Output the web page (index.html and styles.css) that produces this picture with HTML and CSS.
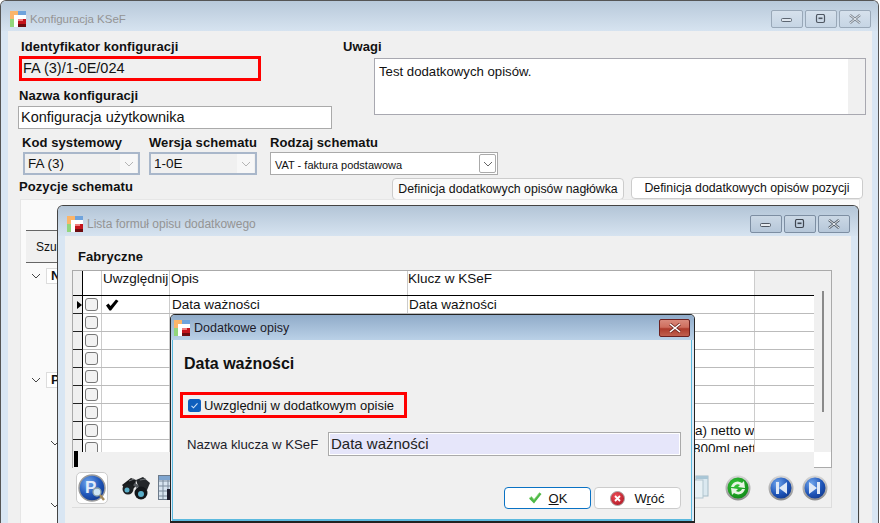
FILE: index.html
```html
<!DOCTYPE html>
<html lang="pl">
<head>
<meta charset="utf-8">
<title>Konfiguracja KSeF</title>
<link rel="stylesheet" href="styles.css">
</head>
<body>
<svg class="defs" width="0" height="0" aria-hidden="true">
  <defs>
    <symbol id="logo" viewBox="0 0 16 16">
      <rect x="0" y="0" width="8" height="8" fill="#fbb56a"/>
      <rect x="8" y="0" width="8" height="4" fill="#6fa3dc"/>
      <rect x="0" y="8" width="4" height="8" fill="#92d67c"/>
      <rect x="4" y="4" width="12" height="12" fill="#fff"/>
      <rect x="8" y="8" width="8" height="8" fill="#c4141c"/>
      <rect x="8" y="13" width="8" height="3" fill="#6d0c10"/>
      <rect x="8" y="8" width="5" height="2" fill="#ef7d7d"/>
    </symbol>
    <radialGradient id="blueB" cx=".35" cy=".3" r=".85">
      <stop offset="0" stop-color="#6fa5ec"/><stop offset=".55" stop-color="#1f55b8"/><stop offset="1" stop-color="#0c2f80"/>
    </radialGradient>
    <radialGradient id="greenB" cx=".4" cy=".35" r=".8">
      <stop offset="0" stop-color="#36c53a"/><stop offset="1" stop-color="#087d10"/>
    </radialGradient>
    <radialGradient id="redB" cx=".4" cy=".35" r=".8">
      <stop offset="0" stop-color="#f0505a"/><stop offset="1" stop-color="#a80f1c"/>
    </radialGradient>
    <linearGradient id="ring" x1="0" y1="0" x2="0" y2="1">
      <stop offset="0" stop-color="#d5d5d5"/><stop offset="1" stop-color="#8f8f8f"/>
    </linearGradient>
  </defs>
</svg>

<section class="win win-main">
  <header class="titlebar">
    <svg class="logo"><use href="#logo"/></svg>
    <span class="title title-off title-main">Konfiguracja KSeF</span>
    <div class="caps caps-main">
      <span class="cap"><svg width="12" height="8" viewBox="0 0 12 8"><rect x=".5" y="3.500" width="10" height="3" rx="1" fill="#dfe6ee" stroke="#5d6672"/></svg></span>
      <span class="cap"><svg width="12" height="10" viewBox="0 0 12 10"><rect x="1.500" y=".5" width="8" height="8" rx="1.500" fill="none" stroke="#4f5762" stroke-width="1.200"/><rect x="3.500" y="3.500" width="4" height="1.600" fill="#4f5762"/></svg></span>
      <span class="cap"><svg width="14" height="10" viewBox="0 0 14 10"><path d="M2 1l10 8M12 1L2 9" stroke="#7d858f" stroke-width="2.400" fill="none"/><path d="M2 1l10 8M12 1L2 9" stroke="#e4e9ef" stroke-width="1" fill="none"/></svg></span>
    </div>
  </header>
  <div class="body-main">
    <div class="top-row">
      <div class="col-id">
        <label class="lbl lbl-id">Identyfikator konfiguracji</label>
        <div class="red-id">FA (3)/1-0E/024</div>
        <label class="lbl lbl-name">Nazwa konfiguracji</label>
        <div class="inp inp-name">Konfiguracja użytkownika</div>
      </div>
      <div class="col-note">
        <label class="lbl">Uwagi</label>
        <div class="memo"><span class="memo-text">Test dodatkowych opisów.</span><span class="memo-track"></span></div>
      </div>
    </div>
    <div class="combo-row">
      <div class="combo-col c-kod">
        <label class="lbl">Kod systemowy</label>
        <div class="combo combo-off"><span>FA (3)</span><span class="drop drop-off"><svg width="10" height="6" viewBox="0 0 10 6"><path d="M1 1l4 4 4-4" fill="none" stroke="#b5b5b5"/></svg></span></div>
      </div>
      <div class="combo-col c-wer">
        <label class="lbl">Wersja schematu</label>
        <div class="combo combo-off"><span>1-0E</span><span class="drop drop-off"><svg width="10" height="6" viewBox="0 0 10 6"><path d="M1 1l4 4 4-4" fill="none" stroke="#b5b5b5"/></svg></span></div>
      </div>
      <div class="combo-col c-rod">
        <label class="lbl">Rodzaj schematu</label>
        <div class="combo combo-on"><span>VAT - faktura podstawowa</span><span class="drop drop-on"><svg width="10" height="6" viewBox="0 0 10 6"><path d="M1 1l4 4 4-4" fill="none" stroke="#666"/></svg></span></div>
      </div>
    </div>
    <div class="pos-row">
      <label class="lbl lbl-pos">Pozycje schematu</label>
      <button class="btn btn-head">Definicja dodatkowych opisów nagłówka</button>
      <button class="btn btn-pos">Definicja dodatkowych opisów pozycji</button>
    </div>
    <div class="panel">
      <div class="search">Szukaj</div>
      <div class="node node-n"><svg width="10" height="6" viewBox="0 0 10 6"><path d="M1 1l4 4 4-4" fill="none" stroke="#444"/></svg><span class="tag">N</span></div>
      <div class="node node-p"><svg width="10" height="6" viewBox="0 0 10 6"><path d="M1 1l4 4 4-4" fill="none" stroke="#444"/></svg><span class="tag">P</span></div>
      <div class="node node-c1"><svg width="10" height="6" viewBox="0 0 10 6"><path d="M1 1l4 4 4-4" fill="none" stroke="#444"/></svg></div>
      <div class="node node-c2"><svg width="10" height="6" viewBox="0 0 10 6"><path d="M1 1l4 4 4-4" fill="none" stroke="#444"/></svg></div>
    </div>
  </div>
</section>

<section class="win win-list">
  <header class="titlebar tb-list">
    <svg class="logo"><use href="#logo"/></svg>
    <span class="title title-off">Lista formuł opisu dodatkowego</span>
    <div class="caps caps-list">
      <span class="cap cap-dark"><svg width="12" height="8" viewBox="0 0 12 8"><rect x=".5" y="3.500" width="10" height="3" rx="1" fill="#e6ebf0" stroke="#4f5762"/></svg></span>
      <span class="cap cap-dark"><svg width="12" height="10" viewBox="0 0 12 10"><rect x="1.500" y=".5" width="8" height="8" rx="1.500" fill="none" stroke="#3f4650" stroke-width="1.200"/><rect x="3.500" y="3.500" width="4" height="1.600" fill="#3f4650"/></svg></span>
      <span class="cap cap-dark"><svg width="14" height="10" viewBox="0 0 14 10"><path d="M2 1l10 8M12 1L2 9" stroke="#56606b" stroke-width="2.600" fill="none"/><path d="M2 1l10 8M12 1L2 9" stroke="#f1f4f7" stroke-width="1" fill="none"/></svg></span>
    </div>
  </header>
  <div class="body-list">
    <h2 class="lbl fab">Fabryczne</h2>
    <div class="grid">
      <div class="grid-main">
        <div class="g-head">
          <span class="c c-ind"></span><span class="c c-chk"></span>
          <span class="c c-uwz">Uwzględnij</span><span class="c c-opis">Opis</span>
          <span class="c c-klucz">Klucz w KSeF</span><span class="c c-ext"></span>
        </div>
        <div class="g-body">
          <div class="g-row"><span class="c c-ind"><i class="tri"></i></span><span class="c c-chk"><i class="box"></i></span><span class="c c-uwz"><svg class="tick" width="14" height="12" viewBox="0 0 14 12"><path d="M1 6.500L3.500 4.500 5.500 7 11 .5 13.500 2 6 11.500H4.500z" fill="#000"/></svg></span><span class="c c-opis val">Data ważności</span><span class="c c-klucz val">Data ważności</span><span class="c c-ext"></span></div>
          <div class="g-row"><span class="c c-ind"></span><span class="c c-chk"><i class="box"></i></span><span class="c c-uwz"></span><span class="c c-opis"></span><span class="c c-klucz"></span><span class="c c-ext"></span></div>
          <div class="g-row"><span class="c c-ind"></span><span class="c c-chk"><i class="box"></i></span><span class="c c-uwz"></span><span class="c c-opis"></span><span class="c c-klucz"></span><span class="c c-ext"></span></div>
          <div class="g-row"><span class="c c-ind"></span><span class="c c-chk"><i class="box"></i></span><span class="c c-uwz"></span><span class="c c-opis"></span><span class="c c-klucz"></span><span class="c c-ext"></span></div>
          <div class="g-row"><span class="c c-ind"></span><span class="c c-chk"><i class="box"></i></span><span class="c c-uwz"></span><span class="c c-opis"></span><span class="c c-klucz"></span><span class="c c-ext"></span></div>
          <div class="g-row"><span class="c c-ind"></span><span class="c c-chk"><i class="box"></i></span><span class="c c-uwz"></span><span class="c c-opis"></span><span class="c c-klucz"></span><span class="c c-ext"></span></div>
          <div class="g-row"><span class="c c-ind"></span><span class="c c-chk"><i class="box"></i></span><span class="c c-uwz"></span><span class="c c-opis"></span><span class="c c-klucz"></span><span class="c c-ext"></span></div>
          <div class="g-row"><span class="c c-ind"></span><span class="c c-chk"><i class="box"></i></span><span class="c c-uwz"></span><span class="c c-opis"></span><span class="c c-klucz val tail">a) netto w</span><span class="c c-ext"></span></div>
          <div class="g-row"><span class="c c-ind"></span><span class="c c-chk"><i class="box"></i></span><span class="c c-uwz"></span><span class="c c-opis"></span><span class="c c-klucz val tail tail-b">800ml netto</span><span class="c c-ext"></span></div>
        </div>
        <div class="hscroll"><i class="hmark"></i></div>
      </div>
      <div class="vscroll"><i class="vthumb"></i><i class="vcorner"></i></div>
    </div>
    <div class="toolbar">
      <span class="tool tool-p">
        <svg width="30" height="30" viewBox="0 0 30 30"><circle cx="15" cy="15" r="13" fill="url(#blueB)" stroke="#9b9b9b" stroke-width="1.500"/><text x="8" y="20" class="tool-p-letter">P</text><circle cx="20" cy="19" r="4" fill="#cfe6f5" stroke="#8aa0a8" stroke-width="1.300"/><path d="M23 22l4 5" stroke="#a58a5a" stroke-width="2.400"/></svg>
      </span>
      <span class="tool-bin">
        <svg width="30" height="24" viewBox="0 0 30 24"><path d="M1 9l9-7 5 2-1 7-6 6z" fill="#181a1c"/><path d="M15 4l7-3 7 6-3 7-7 2z" fill="#24272a"/><circle cx="7" cy="13" r="5.500" fill="#1d2022"/><circle cx="20" cy="17" r="6.500" fill="#14171a"/><circle cx="6" cy="14" r="2.500" fill="#5aaec8"/><circle cx="20" cy="18" r="3" fill="#5aaec8"/><path d="M13 8l4 3" stroke="#55595d" stroke-width="3"/><path d="M8 5l5-2M19 4l6-1" stroke="#6a6e72" stroke-width="1.200"/></svg>
      </span>
      <span class="tool-table">
        <svg width="16" height="26" viewBox="0 0 16 26"><rect x=".5" y=".5" width="15" height="24" fill="#d8e4f0" stroke="#6c7a8a"/><path d="M5 1v23M10 1v23M1 6h14M1 11h14M1 16h14M1 21h14" stroke="#7d8b9c"/><rect x="1" y="1" width="14" height="4" fill="#7fa5cf"/><rect x="9" y="14" width="7" height="11" fill="#1c1c2c"/></svg>
      </span>
      <span class="tool-spacer"></span>
      <span class="tool-win">
        <svg width="18" height="26" viewBox="0 0 18 26"><rect x="4" y="1" width="12" height="20" fill="#dbe9f0" stroke="#a6bcc7"/><rect x="1" y="5" width="10" height="18" fill="#e8f1f5" stroke="#b3c6cf"/><rect x="4" y="1" width="12" height="3" fill="#a9c6d6"/></svg>
      </span>
      <span class="tool-round t-refresh">
        <svg width="26" height="26" viewBox="0 0 26 26"><circle cx="13" cy="13" r="11.500" fill="url(#greenB)" stroke="url(#ring)" stroke-width="2"/><path d="M6 12a7 7 0 0 1 11-4l2-2 1 7-7-1 2-2a4 4 0 0 0-6 2zM20 14a7 7 0 0 1-11 4l-2 2-1-7 7 1-2 2a4 4 0 0 0 6-2z" fill="#e8f4e4"/></svg>
      </span>
      <span class="tool-round t-prev">
        <svg width="26" height="26" viewBox="0 0 26 26"><circle cx="13" cy="13" r="11.500" fill="url(#blueB)" stroke="url(#ring)" stroke-width="2"/><path d="M8 7h3v12H8zM19 7v12l-8-6z" fill="#dfe9f7"/></svg>
      </span>
      <span class="tool-round t-next">
        <svg width="26" height="26" viewBox="0 0 26 26"><circle cx="13" cy="13" r="11.500" fill="url(#blueB)" stroke="url(#ring)" stroke-width="2"/><path d="M18 7h-3v12h3zM7 7v12l8-6z" fill="#dfe9f7"/></svg>
      </span>
    </div>
    <h2 class="lbl hist">Historia</h2>
  </div>
</section>

<section class="win win-dlg">
  <header class="titlebar tb-dlg">
    <svg class="logo"><use href="#logo"/></svg>
    <span class="title title-on">Dodatkowe opisy</span>
    <span class="close-red"><svg width="16" height="10" viewBox="0 0 16 10"><path d="M3 1l10 8M13 1L3 9" stroke="#6f2a24" stroke-width="3" fill="none"/><path d="M3 1l10 8M13 1L3 9" stroke="#fff" stroke-width="1.600" fill="none"/></svg></span>
  </header>
  <div class="body-dlg">
    <h1 class="dlg-head">Data ważności</h1>
    <div class="red-chk">
      <svg class="chk" width="13" height="13" viewBox="0 0 13 13"><rect width="13" height="13" rx="2.500" fill="#0f5fbd"/><path d="M3.500 6.800l2 2 4-4.500" fill="none" stroke="#cfe2f8" stroke-width="1.100"/></svg>
      <span>Uwzględnij w dodatkowym opisie</span>
    </div>
    <div class="key-row">
      <label class="key-lbl">Nazwa klucza w KSeF</label>
      <div class="key-inp">Data ważności</div>
    </div>
    <div class="dlg-btns">
      <button class="dbtn dbtn-ok"><svg width="14" height="12" viewBox="0 0 14 12"><path d="M1 6.500l2.500-2 2.500 3L11.500.5 13.500 2 6 11.500z" fill="#4fb848"/><path d="M1 6.500l2.500-2 2.500 3L11.500.5" fill="none" stroke="#9adf8a" stroke-width=".8"/></svg><span><u>O</u>K</span></button>
      <button class="dbtn dbtn-back"><svg width="15" height="15" viewBox="0 0 15 15"><circle cx="7.500" cy="7.500" r="7" fill="url(#redB)" stroke="#aaa"/><path d="M5 5l5 5M10 5l-5 5" stroke="#fff" stroke-width="1.800"/></svg><span>W<u>r</u>óć</span></button>
    </div>
  </div>
</section>
</body>
</html>
```
FILE: styles.css
```css
* { box-sizing: border-box; }
html, body { margin: 0; padding: 0; }
body {
  width: 880px; height: 523px; position: relative; overflow: hidden;
  background: #fff; color: #111;
  font-family: "Liberation Sans", Arial, sans-serif; font-size: 14px;
}
.defs { position: absolute; }
.win { position: absolute; display: flex; flex-direction: column; overflow: hidden; }
.win-main { left: 0; top: 0; width: 879px; height: 523px; border: 1px solid #555; border-bottom: 0; border-radius: 6px 6px 0 0; background: #d9e6f3; }
.win-list { left: 57px; top: 205px; width: 802px; height: 318px; border: 1px solid #444; border-bottom: 0; border-radius: 6px 6px 0 0; background: #d9e6f3; }
.win-dlg { left: 170px; top: 314px; width: 525px; height: 209px; border: 1px solid #222; border-bottom-width: 2px; border-radius: 5px 5px 0 0; background: #dfeaf5; }

.titlebar { display: flex; align-items: center; flex: none; position: relative; }
.win-main .titlebar { height: 30px; padding: 6px 0 0 9px; background: linear-gradient(#b8c9da, #d6e3f0); }
.win-list .tb-list { height: 30px; padding: 6px 0 0 9px; background: linear-gradient(#b3c5d7, #d6e3f0); }
.tb-dlg { height: 25px; padding-left: 3px; background: linear-gradient(#90abc9, #bad1e7); }
.logo { width: 16px; height: 16px; flex: none; }
.title { font-size: 12px; margin-left: 4px; }
.title-main { font-size: 11.500px; }
.title-off { color: #949494; }
.title-on { color: #1c1c2a; font-size: 12.500px; margin-left: 4px; }

.caps { position: absolute; display: flex; gap: 2px; }
.caps-main { right: 7px; top: 9px; }
.caps-list { right: 8px; top: 9px; }
.win-main .titlebar .cap, .win-list .titlebar .cap { flex: none; }
.cap { width: 32px; height: 18px; border: 1px solid #99a8b8; border-radius: 2px; background: linear-gradient(#d6e1ec, #c6d5e4); display: flex; align-items: center; justify-content: center; }
.cap-dark { border-color: #7d8ea2; background: linear-gradient(#cbd8e5, #b6c7d9); }
.close-red { position: absolute; right: 4px; top: 4px; width: 31px; height: 18px; border: 1px solid #6b2020; border-radius: 2px; background: linear-gradient(#d98a7c 0, #cf6e5e 45%, #ad3b2c 55%, #c0604f 100%); display: flex; align-items: center; justify-content: center; }

.body-main { position: relative; margin: 0 6px 0 7px; flex: 1; background: #f0f0f0; }
.lbl { display: block; font-weight: 700; font-size: 13px; line-height: 15px; color: #111; margin: 0; letter-spacing: .08px; }

.top-row { display: flex; padding: 8px 0 0 10px; height: 103px; }
.col-id { width: 325px; flex: none; }
.lbl-id { margin-left: 3px; }
.red-id { margin: 2px 0 0 1px; width: 242px; height: 25px; border: 3px solid #f00; font-size: 14.500px; line-height: 19px; padding-left: 1px; }
.lbl-name { margin: 7px 0 3px 1px; }
.inp { border: 1px solid #aaa; background: #fff; }
.inp-name { width: 314px; height: 23px; line-height: 21px; padding-left: 2px; font-size: 14.500px; }
.col-note { flex: 1; }
.memo { margin: 4px 0 0 31px; width: 492px; height: 57px; border: 1px solid #a8a8b0; background: #fff; display: flex; font-size: 13.200px; line-height: 15px; }
.memo-text { flex: 1; padding: 5px 4px; }
.memo-track { width: 17px; background: #f0f0f0; }

.combo-row { display: flex; padding-left: 14px; height: 49px; margin-top: -6px; padding-top: 7px; }
.combo-col { flex: none; }
.c-kod { width: 127px; }
.c-wer { width: 121px; }
.c-rod { width: 228px; }
.c-kod .combo { width: 117px; margin-left: 1px; }
.c-wer .combo { width: 108px; }
.c-rod .combo { width: 228px; }
.combo { height: 23px; margin-top: 2px; display: flex; align-items: center; justify-content: space-between; font-size: 13.500px; }
.combo-off { border: 2px solid #a9b7ca; background: #f0f0f0; padding-left: 3px; }
.combo-on { border: 1px solid #aaa; background: #fff; padding: 2px 0 0 4px; font-size: 11px; }
.drop { width: 17px; height: 19px; display: flex; align-items: center; justify-content: center; margin-right: 1px; }
.drop-off { background: #f7f7f7; }
.combo-on .drop-on { border: 1px solid #aaa; border-radius: 2px; background: #fff; margin: -2px 1px 0 0; }

.pos-row { display: flex; align-items: flex-start; height: 24px; padding-left: 11px; }
.lbl-pos { width: 373px; margin-top: 2px; }
.btn { font: 12.300px "Liberation Sans", Arial, sans-serif; color: #111; background: #fff; border: 1px solid #ccc; border-radius: 4px; height: 22px; padding: 0; }
.btn-head { width: 232px; margin-top: 1px; background: #fafafa; }
.btn-pos { width: 232px; margin: 0 0 0 7px; }

.panel { position: absolute; left: 12px; top: 168px; width: 840px; height: 330px; border: 1px solid #e6e6e6; background: #fafafa; }
.search { position: absolute; left: 5px; top: 30px; right: 0; height: 33px; border: 1px solid #666; border-width: 1px 0; background: #f0f0f0; font-size: 12px; line-height: 33px; padding-left: 10px; }
.node { position: absolute; display: flex; align-items: center; gap: 5px; }
.tag { border: 1px solid #ddd; background: #fff; font-weight: 700; font-size: 13px; padding: 0 4px; height: 16px; line-height: 14px; width: 26px; }
.node-n { left: 10px; top: 68px; }
.node-p { left: 10px; top: 172px; }
.node-c1 { left: 29px; top: 240px; }
.node-c2 { left: 29px; top: 302px; }

.body-list { margin: 0 7px; flex: 1; background: #f0f0f0; padding: 0 0 0 7px; overflow: hidden; }
.fab { padding: 13px 0 0 6px; height: 34px; }
.grid { width: 760px; height: 198px; border: 1px solid #aaa; background: #fff; display: flex; }
.grid-main { width: 741px; display: flex; flex-direction: column; }
.g-head { display: flex; flex: none; height: 25px; border-bottom: 1px solid #000; font-size: 13.500px; line-height: 16px; }
.g-body { height: 156px; overflow: hidden; flex: none; }
.g-row { display: flex; height: 18px; border-bottom: 1px solid #bbb; font-size: 13.500px; line-height: 17px; }
.c { display: block; flex: none; height: 100%; border-right: 1px solid #ccc; overflow: hidden; white-space: nowrap; position: relative; }
.c-ind { width: 10px; background: #efefef; border-right: 1px solid #000; }
.g-row .c-ind { box-shadow: 0 1px 0 #222; }
.c-chk { width: 19px; }
.c-uwz { width: 68px; padding-left: 1px; }
.c-opis { width: 238px; padding-left: 1px; }
.c-klucz { width: 347px; }
.c-ext { width: 59px; border-right: 0; }
.g-head .c-ext { background: #f0f0f0; }
.val { padding-left: 2px; }
.c-klucz.val { padding-left: 1px; }
.c-klucz.tail { padding-left: 287px; }
.c-klucz.tail-b { padding-left: 285px; }
.tri { position: absolute; right: 0; top: 5px; width: 0; height: 0; border: 4px solid transparent; border-left: 5px solid #000; border-right: 0; }
.box { position: absolute; left: 2px; top: 2px; width: 13px; height: 13px; border: 1px solid #777; border-radius: 3px; background: #f2f2f2; }
.tick { margin: 3px 0 0 2px; }
.hscroll { height: 16px; flex: none; background: #f0f0f0; position: relative; }
.hmark { position: absolute; left: 1px; top: -1px; width: 4px; height: 16px; background: #000; }
.vscroll { flex: 1; background: #f0f0f0; position: relative; }
.vthumb { position: absolute; left: 8px; top: 20px; width: 2px; height: 121px; background: #8a8a8a; }
.vcorner { position: absolute; left: 0; right: 0; bottom: 0; height: 15px; background: #fff; }

.toolbar { width: 760px; height: 40px; display: flex; align-items: center; border: 1px solid #ddd; border-width: 0 1px 1px 0; }
.toolbar > span { flex: none; display: flex; align-items: center; justify-content: center; }
.toolbar > .tool-p { width: 32px; height: 32px; margin-left: 4px; background: #fff; border: 1px solid #ccc; border-radius: 5px; }
.tool-p-letter { font: 700 17px "Liberation Sans", Arial, sans-serif; fill: #e3ecf9; }
.toolbar > .tool-bin { margin-left: 13px; }
.toolbar > .tool-table { margin-left: 7px; }
.toolbar > .tool-spacer { flex: 1; }
.toolbar > .t-refresh { margin-left: 15px; }
.toolbar > .t-prev { margin-left: 17px; }
.toolbar > .t-next { margin-left: 8px; margin-right: 3px; }

.body-list .hist { padding: 12px 0 0 6px; }

.body-dlg { margin: 0 2px 0 1px; flex: 1; background: #f0f0f0; padding: 0; border-bottom: 2px solid #5bb9de; border-left: 1px solid #5bb9de; border-right: 1px solid #5bb9de; }
.dlg-head { margin: 0; padding: 14px 0 0 11px; font-size: 16px; line-height: 19px; color: #111; font-weight: 700; height: 52px; }
.red-chk { margin-left: 7px; width: 227px; height: 26px; border: 3px solid #f00; display: flex; align-items: center; gap: 3px; padding-left: 5px; font-size: 13px; }
.key-row { display: flex; align-items: center; margin-top: 14px; padding-left: 14px; }
.key-lbl { width: 141px; font-size: 13.200px; color: #1c1c2a; }
.key-inp { width: 353px; height: 24px; border: 1px solid #aaa; background: #e6e6fa; box-shadow: inset 0 0 0 1px #fff; padding-left: 2px; line-height: 21px; font-size: 15px; color: #222; }
.dlg-btns { display: flex; gap: 3px; margin: 31px 0 0 331px; align-items: flex-start; }
.dbtn { width: 87px; height: 22px; padding: 0; border-radius: 4px; background: #fff; display: flex; align-items: center; justify-content: center; gap: 7px; font: 13px "Liberation Sans", Arial, sans-serif; color: #111; }
.dbtn-ok { border: 1px solid #0a72c4; }
.dbtn-back { border: 1px solid #ccc; gap: 9px; }
```
